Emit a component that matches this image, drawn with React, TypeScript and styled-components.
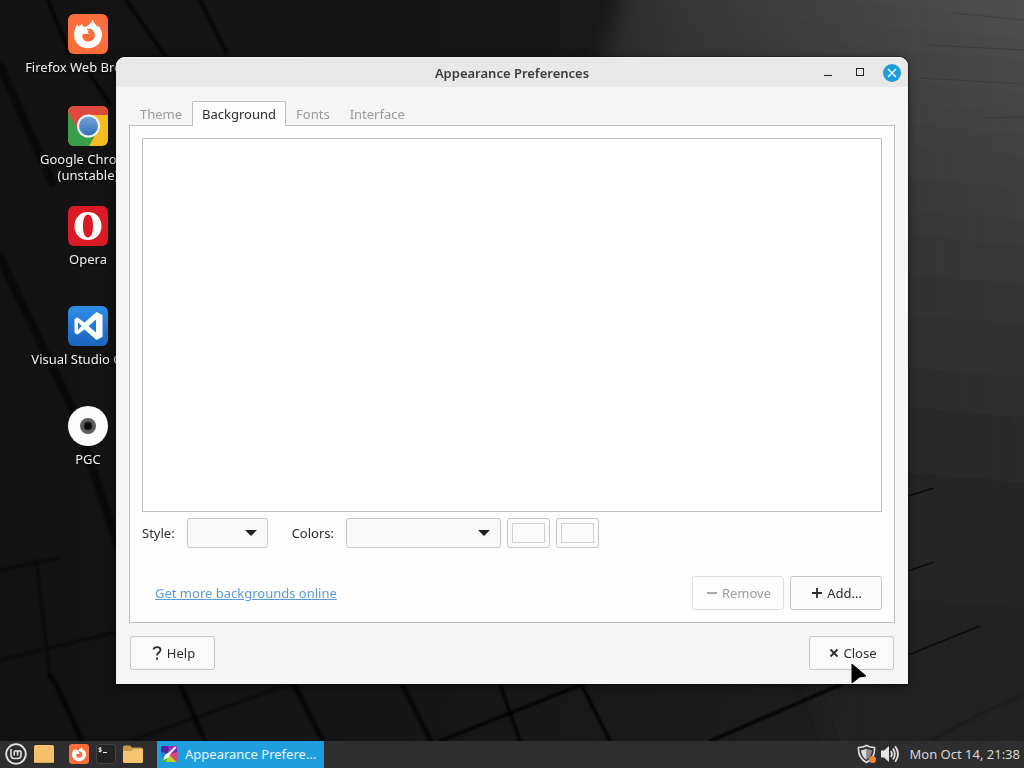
import React, { useState } from "react";
import styled, { createGlobalStyle } from "styled-components";

const GlobalStyle = createGlobalStyle`
  *, *::before, *::after { box-sizing: border-box; }
  body {
    margin: 0;
    background: #161616;
    color: #2c2c2c;
    font-family: "Noto Sans", "Open Sans", sans-serif;
    font-size: 13px;
    line-height: 16px;
  }
  button, select, input { font: inherit; color: inherit; margin: 0; }
`;

const Screen = styled.div`
  display: flex;
  flex-direction: column;
  min-height: 100vh;
`;

const Desktop = styled.main`
  position: relative;
  flex: 1;
  min-height: 700px;
  overflow: hidden;
  background: #151515;
`;

const WallpaperArt = styled.svg`
  position: absolute;
  inset: 0;
  width: 100%;
  height: 100%;
`;

const IconColumn = styled.nav`
  position: relative;
  display: grid;
  grid-template-rows: 92px;
  grid-auto-rows: 100px;
  width: 156px;
  padding: 14px 0 0 20px;
`;

const Launcher = styled.a`
  display: flex;
  flex-direction: column;
  align-items: center;
  gap: 5px;
  color: #f4f4f4;
  text-align: center;
  text-decoration: none;
  text-shadow: 0 1px 2px #000;
  svg { flex: none; display: block; }
`;

const LauncherLabel = styled.span`
  white-space: pre;
`;

const AppWindow = styled.section`
  position: absolute;
  top: 57px;
  left: 116px;
  right: 116px;
  border-radius: 9px 9px 0 0;
  background: #f5f5f5;
  box-shadow: 0 0 0 1px rgba(0, 0, 0, 0.3), 0 2px 10px rgba(0, 0, 0, 0.5);
`;

const TitleBar = styled.header`
  display: grid;
  grid-template-columns: 1fr auto 1fr;
  align-items: center;
  height: 30px;
  padding: 0 7px;
  border-top: 1px solid #f4f4f4;
  border-radius: 9px 9px 0 0;
  background: #e8e8e8;
`;

const WindowTitle = styled.h1`
  grid-column: 2;
  margin: 0;
  color: #3c3c3c;
  font-size: 13px;
  font-weight: 600;
  line-height: 16px;
`;

const WindowControls = styled.div`
  display: flex;
  justify-content: flex-end;
  gap: 14px;
`;

const WindowControl = styled.button<{ $close?: boolean }>`
  display: block;
  width: 18px;
  height: 18px;
  padding: 0;
  border: 0;
  border-radius: 50%;
  background: ${(p) => (p.$close ? "#1f9ede" : "transparent")};
  svg { display: block; }
`;

const WindowBody = styled.div`
  padding: 14px 13px;
`;

const TabList = styled.div`
  position: relative;
  display: flex;
  height: 25px;
  margin-bottom: -1px;
`;

const Tab = styled.button<{ $active: boolean }>`
  height: 25px;
  padding: 0 9px;
  border: 1px solid ${(p) => (p.$active ? "#bdbdbd" : "transparent")};
  border-bottom: 0;
  border-radius: 2px 2px 0 0;
  background: ${(p) => (p.$active ? "#fefefe" : "transparent")};
  color: ${(p) => (p.$active ? "#2c2c2c" : "#9a9a9a")};
  &:first-child { margin-left: 1px; }
`;

const Panel = styled.div`
  display: flex;
  flex-direction: column;
  padding: 12px;
  border: 1px solid #bdbdbd;
  background: #fefefe;
`;

const BackgroundList = styled.div`
  height: 374px;
  border: 1px solid #c2c2c2;
  background: #fff;
`;

const OptionRow = styled.div`
  display: flex;
  align-items: center;
  gap: 6px;
  margin-top: 6px;
`;

const Field = styled.label`
  display: flex;
  align-items: center;
  gap: 12px;
  & + & { margin-left: 18px; }
`;

const SelectBox = styled.span<{ $width: number }>`
  display: grid;
  align-items: center;
  width: ${(p) => p.$width}px;
  svg {
    grid-area: 1 / 1;
    justify-self: end;
    margin-right: 11px;
    pointer-events: none;
  }
`;

const Select = styled.select`
  grid-area: 1 / 1;
  appearance: none;
  width: 100%;
  height: 30px;
  border: 1px solid #c6c6c6;
  border-radius: 3px;
  background: #f8f8f8;
`;

const ColorButton = styled.input`
  appearance: none;
  width: 43px;
  height: 30px;
  padding: 4px;
  border: 1px solid #c6c6c6;
  border-radius: 3px;
  background: #fbfbfb;
  &::-webkit-color-swatch-wrapper { padding: 0; }
  &::-webkit-color-swatch { border: 1px solid #d0d0d0; border-radius: 0; }
`;

const ActionRow = styled.div`
  display: flex;
  align-items: center;
  gap: 6px;
  margin-top: 28px;
`;

const MoreLink = styled.a`
  margin: 0 auto 0 13px;
  color: #5a9ad8;
`;

const Button = styled.button<{ $width: number }>`
  display: flex;
  align-items: center;
  justify-content: center;
  gap: 5px;
  width: ${(p) => p.$width}px;
  height: 34px;
  padding: 0 0 0 2px;
  border: 1px solid #c6c6c6;
  border-radius: 3px;
  background: #fafafa;
  &:disabled { color: #9d9d9d; border-color: #dedede; background: #fdfdfd; }
`;

const DialogActions = styled.footer`
  display: flex;
  justify-content: space-between;
  padding: 13px 1px 0;
`;

const Pointer = styled.svg`
  position: absolute;
  right: 40px;
  bottom: -1px;
  pointer-events: none;
`;

const Taskbar = styled.footer`
  display: flex;
  align-items: center;
  height: 27px;
  padding: 0 4px 0 5px;
  background: #2e2e2e;
  color: #d8d8d8;
`;

const QuickLaunch = styled.div`
  display: flex;
  align-items: center;
  gap: 7px;
  & + & { margin-left: 15px; }
`;

const BarButton = styled.button`
  display: block;
  padding: 0 0 1px;
  border: 0;
  background: none;
  svg { display: block; }
`;

const TaskButton = styled.button`
  display: flex;
  align-items: center;
  gap: 8px;
  align-self: stretch;
  width: 167px;
  margin: 0 auto 0 14px;
  padding: 0 4px 1px;
  border: 0;
  background: #1f9ede;
  color: #e6f6ff;
  text-align: left;
  svg { flex: none; }
`;

const TaskTitle = styled.span`
  overflow: hidden;
  text-overflow: ellipsis;
  white-space: nowrap;
`;

const Tray = styled.div`
  display: flex;
  align-items: center;
  gap: 4px;
`;

const Clock = styled.time`
  margin-left: 6px;
  padding-bottom: 1px;
`;

function Wallpaper() {
  return (
    <WallpaperArt viewBox="0 0 1024 741" preserveAspectRatio="none" aria-hidden="true">
      <defs>
        <linearGradient id="base" x1="0" x2="1" y1="0" y2="0">
          <stop offset="0" stopColor="#121212" />
          <stop offset="0.5" stopColor="#171717" />
          <stop offset="1" stopColor="#222222" />
        </linearGradient>
        <linearGradient id="slab" gradientUnits="userSpaceOnUse" x1="1024" y1="0" x2="960" y2="741">
          <stop offset="0" stopColor="#505050" />
          <stop offset="0.3" stopColor="#3b3b3b" />
          <stop offset="0.62" stopColor="#292929" />
          <stop offset="1" stopColor="#202020" />
        </linearGradient>
        <linearGradient id="slabFade" gradientUnits="userSpaceOnUse" x1="590" y1="0" x2="1024" y2="0">
          <stop offset="0" stopColor="#fff" stopOpacity="0.3" />
          <stop offset="0.2" stopColor="#fff" stopOpacity="0.55" />
          <stop offset="0.7" stopColor="#fff" stopOpacity="0.85" />
          <stop offset="1" stopColor="#fff" />
        </linearGradient>
        <mask id="slabMask">
          <rect width="1024" height="741" fill="url(#slabFade)" />
        </mask>
        <filter id="soft" x="-10%" y="-10%" width="120%" height="120%">
          <feGaussianBlur stdDeviation="9" />
        </filter>
        <filter id="seam" x="-10%" y="-10%" width="120%" height="120%">
          <feGaussianBlur stdDeviation="1.2" />
        </filter>
      </defs>
      <rect width="1024" height="741" fill="url(#base)" />
      <g mask="url(#slabMask)">
        <path d="M634 -40H1080V800H850L600 60Z" fill="url(#slab)" filter="url(#soft)" />
      </g>
      <g fill="none" stroke="#050505" strokeLinecap="round" filter="url(#seam)">
        <path strokeWidth="3" opacity="0.8" d="M48 0L70 55M126 0L166 57M90 75L110 104M200 0L226 52" />
        <path strokeWidth="8" opacity="0.5" d="M0 66L52 182M0 258L72 408L118 545" />
        <path strokeWidth="5" opacity="0.65" d="M50 676L56 684L82 741M180 684L205 741M294 684L323 741M402 684L431 741" />
        <path strokeWidth="3" opacity="0.9" d="M500 684L520 741M581 684L610 741" />
        <path strokeWidth="3" opacity="0.45" d="M130 741L290 684M0 660L116 632M0 570L60 558M36 560L50 676" />
        <path strokeWidth="3" opacity="0.9" d="M440 741L583 684M710 741L842 684" />
        <path strokeWidth="2" opacity="0.25" d="M930 741L980 714L1024 694" />
      </g>
      <path
        fill="none"
        stroke="#0c0c0c"
        strokeWidth="1.500"
        d="M908 496L934 488M908 571L934 562M908 655L980 626"
      />
      <g fill="none" stroke="#2b2b2b" opacity="0.4">
        <path d="M952 13L1024 20M926 45L1024 50M920 78L1024 84M984 118L1024 117" />
      </g>
    </WallpaperArt>
  );
}

function FirefoxIcon({ size }: { size: number }) {
  return (
    <svg width={size} height={size} viewBox="0 0 40 40" aria-hidden="true">
      <rect width="40" height="40" rx="6" fill="#fb6d3a" />
      <path
        fill="#fff"
        d="M9.500 10C10 11.500 10.600 12.300 11.500 12.600L14 9.500C14.200 11.500 15 12.600 17 13C19 12.500 19.800 11.500 21 10.500C23 9 24 7.500 24.800 5.500C25.200 8 26.500 9.500 28 11L29.500 13L30 11.500C32.500 14 34 17 34 20.500C34 28.500 28 34.300 20 34.300C12 34.300 6 28.500 6 20.500C6 16.500 7.500 14 9.500 10Z"
      />
      <path
        fill="#fb6d3a"
        d="M18.500 14C21 15.500 23 14 25 16.500C28 20 27.500 25 23 27C19 28.600 14.800 26.500 14.300 22.500C14.100 20.800 14.800 20 16 19.800C18 19.500 19 20.800 21.500 19.300C19.800 19 19.500 18 20 17.300L21.800 16.600C20 16.500 18.800 15.600 18.500 14Z"
      />
    </svg>
  );
}

function ChromeIcon() {
  return (
    <svg width="40" height="40" viewBox="0 0 40 40" aria-hidden="true">
      <defs>
        <clipPath id="chromeTile"><rect width="40" height="40" rx="6" /></clipPath>
        <linearGradient id="chromeBlue" x1="0" x2="0" y1="0" y2="1">
          <stop offset="0" stopColor="#6fa6dc" />
          <stop offset="1" stopColor="#3470b4" />
        </linearGradient>
      </defs>
      <g clipPath="url(#chromeTile)">
        <rect width="40" height="40" fill="#f2bd1d" />
        <path d="M0 4L11 26L20 31L29 26L21 40H0Z" fill="#3a9d49" />
        <path d="M0 0H40V9H20L10 24L0 6Z" fill="#e0483e" />
      </g>
      <circle cx="20.500" cy="20" r="11.500" fill="#f5f5f5" />
      <circle cx="20.500" cy="20" r="9.500" fill="url(#chromeBlue)" />
    </svg>
  );
}

function OperaIcon() {
  return (
    <svg width="40" height="40" viewBox="0 0 40 40" aria-hidden="true">
      <rect width="40" height="40" rx="6" fill="#dc1a26" />
      <path
        fill="#fff"
        fillRule="evenodd"
        d="M20 6C28 6 33.500 12 33.500 20C33.500 28 28 34 20 34C12 34 6.500 28 6.500 20C6.500 12 12 6 20 6ZM20 8.500C16.500 8.500 15 13.500 15 20C15 26.500 16.500 31.500 20 31.500C23.500 31.500 25 26.500 25 20C25 13.500 23.500 8.500 20 8.500Z"
      />
    </svg>
  );
}

function CodeIcon() {
  return (
    <svg width="40" height="40" viewBox="0 0 40 40" aria-hidden="true">
      <defs>
        <linearGradient id="codeBlue" x1="0" x2="0" y1="0" y2="1">
          <stop offset="0" stopColor="#2f8ee8" />
          <stop offset="1" stopColor="#1b64bd" />
        </linearGradient>
      </defs>
      <rect width="40" height="40" rx="6" fill="url(#codeBlue)" />
      <path
        fill="#fff"
        fillRule="evenodd"
        d="M28.500 6L34.500 9V31L28.500 34L16.500 23.500L9.500 28.500L6.500 27V13L9.500 11.500L16.500 16.500ZM28 13.500L20.500 20L28 26.500ZM10 16V24L13.500 20Z"
      />
    </svg>
  );
}

function DiscIcon() {
  return (
    <svg width="40" height="40" viewBox="0 0 40 40" aria-hidden="true">
      <circle cx="20" cy="20" r="20" fill="#fbfbfb" />
      <circle cx="20" cy="20" r="8" fill="#5c5c5c" />
      <circle cx="20" cy="20" r="4" fill="#080808" stroke="#2e2e2e" strokeWidth="1" />
    </svg>
  );
}

function MintIcon() {
  return (
    <svg width="22" height="22" viewBox="0 0 22 22" fill="none" stroke="#e4e4e4" aria-hidden="true">
      <circle cx="11" cy="11" r="9.800" strokeWidth="1.800" />
      <path strokeWidth="1.600" d="M6 6V12.500A3 3 0 0 0 9 15.500H13A3 3 0 0 0 16 12.500V9.500A1.700 1.700 0 0 0 12.600 9.500V12.500M12.600 9.500A1.700 1.700 0 0 0 9.200 9.500V12.500" />
    </svg>
  );
}

function DesktopFolderIcon() {
  return (
    <svg width="20" height="20" viewBox="0 0 20 20" aria-hidden="true">
      <rect y="1" width="20" height="18" rx="1.500" fill="#f4c06c" />
      <path d="M1 18.500H19" stroke="#d9a550" />
    </svg>
  );
}

function FilesIcon() {
  return (
    <svg width="20" height="20" viewBox="0 0 20 20" aria-hidden="true">
      <path d="M0 3A1.500 1.500 0 0 1 1.500 1.500H7L9 3.500H18.500A1.500 1.500 0 0 1 20 5V8H0Z" fill="#c99745" />
      <path d="M0 7H8L10 5H20V17.500A1.500 1.500 0 0 1 18.500 19H1.500A1.500 1.500 0 0 1 0 17.500Z" fill="#f6c471" />
    </svg>
  );
}

function TerminalIcon() {
  return (
    <svg width="20" height="20" viewBox="0 0 20 20" fill="none" aria-hidden="true">
      <rect x="0.500" y="0.500" width="19" height="19" rx="2.500" fill="#222" stroke="#444" />
      <path stroke="#eee" d="M5.500 4H3.500C2.500 4 2.500 5.700 3.500 5.700H4.700C5.800 5.700 5.800 7.500 4.700 7.500H2.600M4.100 3V8.500M7 8.500H11" />
    </svg>
  );
}

function AppearanceIcon() {
  return (
    <svg width="16" height="16" viewBox="0 0 16 16" aria-hidden="true">
      <defs>
        <clipPath id="appearTile"><rect width="16" height="16" rx="1.500" /></clipPath>
      </defs>
      <g clipPath="url(#appearTile)">
        <rect width="16" height="16" fill="#6b2db5" />
        <path d="M0 0H7L8 8L0 6Z" fill="#4a2b9c" />
        <path d="M7 0H16V3L8 8Z" fill="#9a2abf" />
        <path d="M0 6L8 8L0 13Z" fill="#2a7fd6" />
        <path d="M0 12L8 8L6 16H0Z" fill="#29b765" />
        <path d="M8 8L16 16H5Z" fill="#b7d22b" />
        <path d="M16 6V16L8 8Z" fill="#e8416d" />
      </g>
      <path d="M15.500 1.500L9 8.500L7.500 11.500L2.500 14L4 9L7 7L14 0.500Z" fill="#fff" />
    </svg>
  );
}

function ShieldIcon() {
  return (
    <svg width="20" height="20" viewBox="0 0 20 20" aria-hidden="true">
      <path d="M9.500 1.500C12 3 14.500 3.500 17.500 3.500C18 10 15 15.500 9.500 18.500C4 15.500 1 10 1.500 3.500C4.500 3.500 7 3 9.500 1.500Z" fill="#333" stroke="#ddd" strokeWidth="1.600" />
      <path d="M9.500 4.500C11.500 5.500 13 6 15 6C14.800 10.500 13 13.500 9.500 15.800Z" fill="#8c8c8c" />
      <path d="M9.500 4.500C7.500 5.500 6 6 4 6C4.200 10.500 6 13.500 9.500 15.800Z" fill="#dcdcdc" />
      <circle cx="15.500" cy="15.500" r="3.500" fill="#ee8a35" />
    </svg>
  );
}

function VolumeIcon() {
  return (
    <svg width="18" height="18" viewBox="0 0 18 18" fill="none" stroke="#e4e4e4" aria-hidden="true">
      <path d="M0 5.500H3L8 1V17L3 12.500H0Z" fill="#e4e4e4" stroke="none" />
      <path strokeWidth="1.800" d="M9.800 6Q12 9 9.800 12M12 3.500Q15.600 9 12 14.500M14.200 1.200Q19.800 9 14.200 16.800" />
    </svg>
  );
}

function Arrow() {
  return (
    <svg width="12" height="6" viewBox="0 0 12 6" aria-hidden="true">
      <path d="M0 0H12L6 6Z" fill="#222" />
    </svg>
  );
}

function Glyph({ d }: { d: string }) {
  return (
    <svg width="10" height="14" viewBox="0 0 10 14" fill="none" stroke="currentColor" strokeWidth="1.800" aria-hidden="true">
      <path d={d} />
    </svg>
  );
}

const launchers = [
  { name: "Firefox Web Browser", icon: <FirefoxIcon size={40} /> },
  { name: "Google Chrome\n(unstable)", icon: <ChromeIcon /> },
  { name: "Opera", icon: <OperaIcon /> },
  { name: "Visual Studio Code", icon: <CodeIcon /> },
  { name: "PGC", icon: <DiscIcon /> },
];

const tabs = ["Theme", "Background", "Fonts", "Interface"];

export default function App() {
  const [active, setActive] = useState("Background");

  return (
    <Screen>
      <GlobalStyle />
      <Desktop>
        <Wallpaper />
        <IconColumn aria-label="Desktop">
          {launchers.map((item) => (
            <Launcher key={item.name} href="#">
              {item.icon}
              <LauncherLabel>{item.name}</LauncherLabel>
            </Launcher>
          ))}
        </IconColumn>

        <AppWindow aria-labelledby="window-title">
          <TitleBar>
            <WindowTitle id="window-title">Appearance Preferences</WindowTitle>
            <WindowControls>
              <WindowControl aria-label="Minimize">
                <svg width="18" height="18" viewBox="0 0 18 18"><path d="M5 11.500H13" stroke="#222" /></svg>
              </WindowControl>
              <WindowControl aria-label="Maximize">
                <svg width="18" height="18" viewBox="0 0 18 18"><rect x="5.500" y="4.500" width="7" height="7" fill="none" stroke="#222" /></svg>
              </WindowControl>
              <WindowControl $close aria-label="Close window">
                <svg width="18" height="18" viewBox="0 0 18 18"><path d="M5 5L13 13M13 5L5 13" stroke="#fff" strokeWidth="1.300" /></svg>
              </WindowControl>
            </WindowControls>
          </TitleBar>

          <WindowBody>
            <TabList role="tablist">
              {tabs.map((tab) => (
                <Tab
                  key={tab}
                  role="tab"
                  aria-selected={tab === active}
                  $active={tab === active}
                  onClick={() => setActive(tab)}
                >
                  {tab}
                </Tab>
              ))}
            </TabList>
            <Panel role="tabpanel" aria-label={active}>
              <BackgroundList role="listbox" aria-label="Backgrounds" />
              <OptionRow>
                <Field>
                  Style:
                  <SelectBox $width={81}>
                    <Select />
                    <Arrow />
                  </SelectBox>
                </Field>
                <Field>
                  Colors:
                  <SelectBox $width={155}>
                    <Select />
                    <Arrow />
                  </SelectBox>
                </Field>
                <ColorButton type="color" defaultValue="#fafafa" aria-label="Primary color" />
                <ColorButton type="color" defaultValue="#fafafa" aria-label="Secondary color" />
              </OptionRow>
              <ActionRow>
                <MoreLink href="#">Get more backgrounds online</MoreLink>
                <Button $width={92} disabled>
                  <Glyph d="M0 7H10" />
                  Remove
                </Button>
                <Button $width={92}>
                  <Glyph d="M0 7H10M5 2V12" />
                  Add...
                </Button>
              </ActionRow>
            </Panel>
            <DialogActions>
              <Button $width={85}>
                <Glyph d="M1.500 3.500C2 0.500 8.500 0 8.500 4C8.500 6.500 5 6.500 5 9.500M5 11.500V13.700" />
                Help
              </Button>
              <Button $width={85}>
                <Glyph d="M1.500 3.500L8.500 10.500M8.500 3.500L1.500 10.500" />
                Close
              </Button>
            </DialogActions>
          </WindowBody>
          <Pointer width="18" height="23" viewBox="0 0 18 23" aria-hidden="true">
            <path d="M2 2L16 14L9.500 15L2 21Z" fill="#000" stroke="#000" strokeWidth="1" strokeLinejoin="round" />
          </Pointer>
        </AppWindow>
      </Desktop>

      <Taskbar>
        <QuickLaunch>
          <BarButton aria-label="Menu"><MintIcon /></BarButton>
          <BarButton aria-label="Show desktop"><DesktopFolderIcon /></BarButton>
        </QuickLaunch>
        <QuickLaunch>
          <BarButton aria-label="Firefox"><FirefoxIcon size={20} /></BarButton>
          <BarButton aria-label="Terminal"><TerminalIcon /></BarButton>
          <BarButton aria-label="Files"><FilesIcon /></BarButton>
        </QuickLaunch>
        <TaskButton title="Appearance Preferences">
          <AppearanceIcon />
          <TaskTitle>Appearance Preferences</TaskTitle>
        </TaskButton>
        <Tray>
          <BarButton aria-label="Update manager"><ShieldIcon /></BarButton>
          <BarButton aria-label="Volume"><VolumeIcon /></BarButton>
          <Clock dateTime="2024-10-14T21:38">Mon Oct 14, 21:38</Clock>
        </Tray>
      </Taskbar>
    </Screen>
  );
}
